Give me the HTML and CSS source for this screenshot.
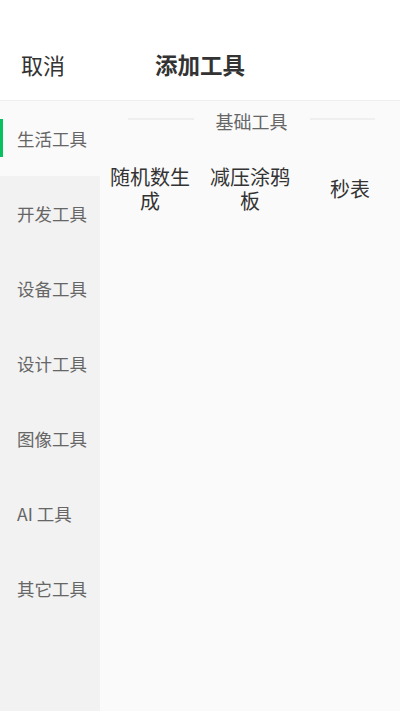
FILE: index.html
```html
<!DOCTYPE html>
<html lang="zh">
<head>
<meta charset="utf-8">
<title>添加工具</title>
<link rel="stylesheet" href="styles.css">
</head>
<body>
<div class="page">
  <header class="header">
    <span class="cancel">取消</span>
    <span class="title">添加工具</span>
    <span></span>
  </header>
  <div class="main">
    <nav class="sidebar">
      <div class="nav-item active">生活工具</div>
      <div class="nav-item">开发工具</div>
      <div class="nav-item">设备工具</div>
      <div class="nav-item">设计工具</div>
      <div class="nav-item">图像工具</div>
      <div class="nav-item">AI 工具</div>
      <div class="nav-item">其它工具</div>
    </nav>
    <section class="content">
      <div class="section-title">
        <span class="line"></span>
        <span class="section-text">基础工具</span>
        <span class="line"></span>
      </div>
      <div class="grid">
        <div class="tool">随机数生成</div>
        <div class="tool">减压涂鸦板</div>
        <div class="tool">秒表</div>
      </div>
    </section>
  </div>
</div>
</body>
</html>
```
FILE: styles.css
```css
html, body {
  margin: 0;
  padding: 0;
}
body {
  font-family: "Noto Sans CJK SC", "Noto Sans", sans-serif;
  background: #ffffff;
}
.page {
  width: 400px;
  height: 711px;
  display: flex;
  flex-direction: column;
  overflow: hidden;
}
.header {
  height: 101px;
  flex: none;
  display: grid;
  grid-template-columns: 1fr auto 1fr;
  align-items: center;
  background: #ffffff;
  border-bottom: 1px solid #efefef;
  box-sizing: border-box;
}
.cancel {
  padding-left: 21px;
  font-size: 22px;
  color: #333333;
  line-height: 1;
  margin-top: 28px;
}
.title {
  font-size: 22.5px;
  font-weight: bold;
  color: #333333;
  line-height: 1;
  margin-top: 28px;
}
.main {
  flex: 1;
  display: flex;
  min-height: 0;
}
.sidebar {
  width: 100px;
  flex: none;
  background: #f2f2f2;
  display: flex;
  flex-direction: column;
}
.nav-item {
  height: 75px;
  display: flex;
  align-items: center;
  padding-left: 17px;
  font-size: 17.5px;
  color: #666666;
  position: relative;
}
.nav-item.active {
  background: #fafafa;
}
.nav-item.active::before {
  content: "";
  position: absolute;
  left: 0;
  top: 18px;
  width: 3px;
  height: 38px;
  background: #07c160;
}
.content {
  flex: 1;
  background: #fafafa;
}
.section-title {
  height: 40px;
  display: flex;
  align-items: center;
  padding: 0 25px 0 28px;
}
.line {
  flex: 1;
  height: 2px;
  background: #efefef;
  margin-top: -4px;
}
.section-text {
  margin: 0 22px;
  font-size: 18px;
  color: #666666;
  line-height: 1;
}
.grid {
  display: grid;
  grid-template-columns: repeat(3, 100px);
  padding-top: 24px;
}
.tool {
  height: 48px;
  padding: 0 10px;
  display: flex;
  align-items: center;
  justify-content: center;
  text-align: center;
  font-size: 20px;
  line-height: 24px;
  color: #333333;
}
```
